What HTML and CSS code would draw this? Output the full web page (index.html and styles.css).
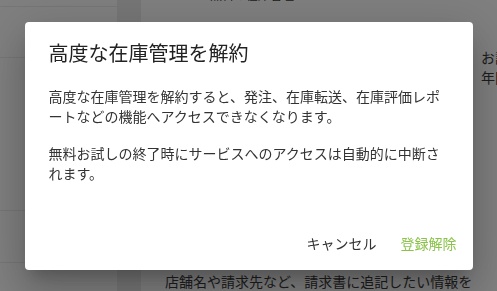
FILE: index.html
```html
<!DOCTYPE html>
<html lang="ja">
<head>
<meta charset="utf-8">
<title>高度な在庫管理を解約</title>
<link rel="stylesheet" href="styles.css">
</head>
<body>
<div class="page">
  <aside class="sidebar">
    <div class="side-row r1"></div>
    <div class="side-row r2"></div>
    <div class="side-row r3"></div>
    <div class="side-row r4"></div>
    <div class="side-row r5"></div>
  </aside>
  <div class="gutter"></div>
  <main class="main">
    <div class="main-head">無料の在庫管理</div>
    <div class="main-desc">お試し期間中はすべての機能をご利用いただけます。<br>年間プランへの切り替えはいつでも可能です。</div>
    <div class="main-foot">店舗名や請求先など、請求書に追記したい情報を入力してください。</div>
  </main>
</div>
<div class="overlay">
  <div class="dialog" role="dialog">
    <h2 class="dialog-title">高度な在庫管理を解約</h2>
    <div class="dialog-body">
      <p>高度な在庫管理を解約すると、発注、在庫転送、在庫評価レポートなどの機能へアクセスできなくなります。</p>
      <p>無料お試しの終了時にサービスへのアクセスは自動的に中断されます。</p>
    </div>
    <div class="dialog-actions">
      <button class="btn">キャンセル</button>
      <button class="btn btn-primary">登録解除</button>
    </div>
  </div>
</div>
</body>
</html>
```

FILE: styles.css
```css
* { box-sizing: border-box; }

html, body {
  margin: 0;
  height: 100%;
  overflow: hidden;
}

body {
  font-family: "Noto Sans CJK JP", "Noto Sans", sans-serif;
  font-size: 14px;
  color: #333;
  background: #fff;
}

.page {
  display: flex;
  height: 100%;
}

.sidebar {
  width: 117px;
  flex: none;
  background: #fff;
  display: flex;
  flex-direction: column;
}

.side-row { border-bottom: 1px solid #ececec; }
.r1 { height: 7px; }
.r2 { height: 51px; }
.r3 { height: 153px; }
.r4 { height: 52px; }
.r5 { flex: 1; border-bottom: none; }

.gutter {
  width: 24px;
  flex: none;
  background: #ededed;
}

.main {
  flex: 1;
  overflow: hidden;
  background: #fff;
  color: #3a3a3a;
  padding-right: 24px;
}

.main-head {
  font-size: 12px;
  line-height: 16px;
  margin-top: -13px;
  padding-left: 69px;
  white-space: nowrap;
}

.main-desc {
  margin-top: 44px;
  padding-left: 340px;
  line-height: 20px;
  white-space: nowrap;
}

.main-foot {
  margin-top: 184px;
  padding-left: 24px;
  line-height: 20px;
}

.overlay {
  position: fixed;
  inset: 0;
  background: rgba(0, 0, 0, 0.5);
  display: flex;
  align-items: center;
  justify-content: center;
}

.dialog {
  width: 448px;
  background: #fff;
  border-radius: 4px;
  padding-top: 17px;
  box-shadow: 0 11px 15px -7px rgba(0,0,0,.2), 0 24px 38px 3px rgba(0,0,0,.14), 0 9px 46px 8px rgba(0,0,0,.12);
}

.dialog-title {
  margin: 0;
  padding: 0 24px;
  font-size: 20px;
  line-height: 28px;
  font-weight: 400;
  color: #222;
}

.dialog-body {
  margin-top: 19px;
  padding: 0 24px;
  line-height: 20px;
  color: #333;
}

.dialog-body p { margin: 0; }
.dialog-body p + p { margin-top: 17px; }

.dialog-actions {
  margin-top: 34px;
  padding: 8px 8px 9px;
  display: flex;
  justify-content: flex-end;
}

.btn {
  font-family: inherit;
  font-size: 14px;
  line-height: 36px;
  height: 36px;
  padding: 0 8px;
  margin: 0 0 0 8px;
  border: none;
  background: transparent;
  color: #333;
  cursor: pointer;
}

.btn-primary { color: #8bc34a; }
```
